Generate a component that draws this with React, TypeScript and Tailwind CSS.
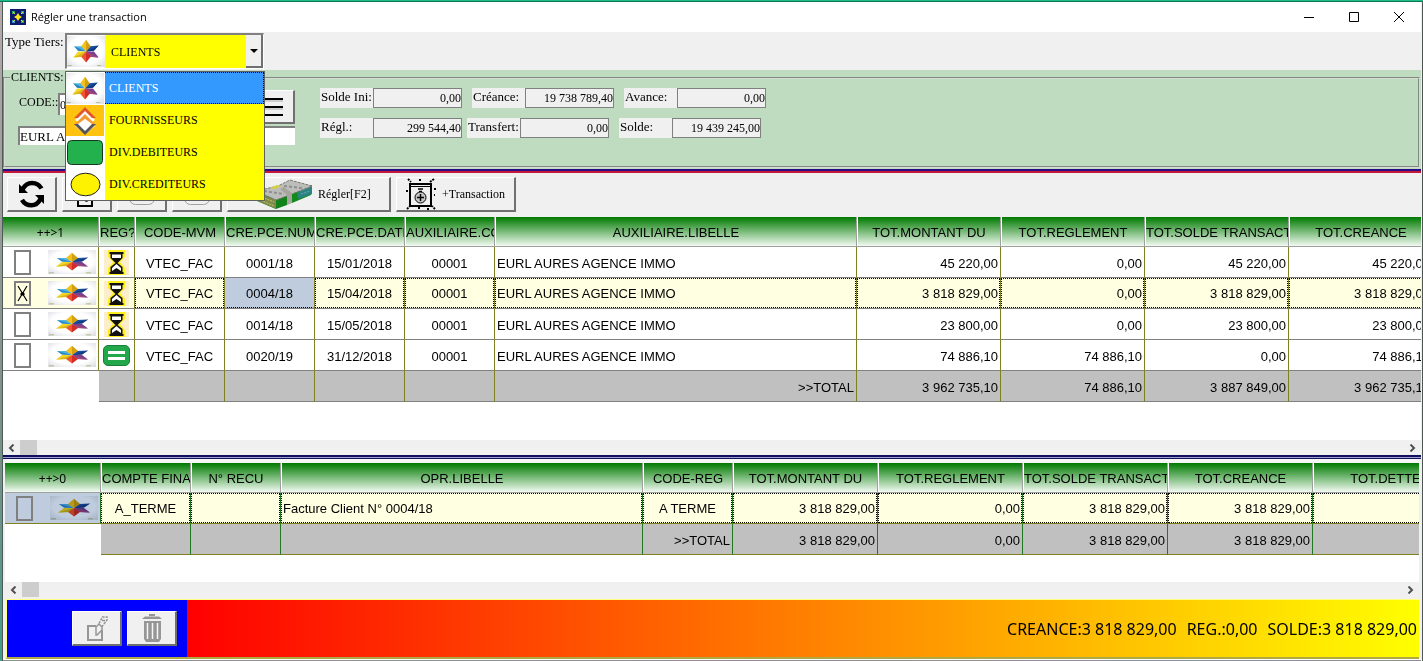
import React, { useState } from "react";

const SERIF = "font-['Liberation_Serif',serif]";
const SANS = "font-['Liberation_Sans',sans-serif]";
const BEVEL =
  "flex items-center border-t border-l border-r-2 border-b-2 border-t-white border-l-white border-r-[#707070] border-b-[#707070] bg-[#f0f0f0]";

function Star({ className }: { className: string }) {
  return (
    <svg viewBox="0 0 48 42" preserveAspectRatio="none" className={className} aria-hidden="true">
      <defs>
        <radialGradient id="paper" cx="50%" cy="45%" r="72%">
          <stop offset="0.6" stopColor="#fff" />
          <stop offset="1" stopColor="#dcdde3" />
        </radialGradient>
      </defs>
      <rect width="48" height="42" fill="url(#paper)" />
      <path d="M24 21 19 14 9 14 14 20Z" fill="#4db4e6" />
      <path d="M9 14 14 20 24 21Z" fill="#2a85bf" />
      <path d="M24 21 29 14 40 13 34 20Z" fill="#1c4fa0" />
      <path d="M40 13 34 20 24 21Z" fill="#123a80" />
      <path d="M24 21 14 21 8 29 19 28Z" fill="#f4d626" />
      <path d="M24 21 8 29 19 28Z" fill="#d9b51c" />
      <path d="M24 21 34 21 40 29 29 28Z" fill="#7b3f8e" />
      <path d="M24 21 40 29 29 28Z" fill="#a04678" />
      <path d="M24 5 18 14 24 21Z" fill="#f2c21a" />
      <path d="M24 5 30 14 24 21Z" fill="#d3a013" />
      <path d="M24 36 18 28 24 21Z" fill="#f0562a" />
      <path d="M24 36 30 28 24 21Z" fill="#d42b2b" />
      <path d="M1 40h5M38 40h5" stroke="#9fb06a" strokeWidth="1" />
    </svg>
  );
}

function Chevrons() {
  return (
    <svg viewBox="0 0 38 31" className="h-[31px] w-[38px]" aria-hidden="true">
      <rect width="38" height="31" fill="#ffc20e" />
      <path d="M19 5 9 15l5 3h10l5-3Z" fill="#fff" />
      <path d="M19 2 8 13h4l7-7 7 7h4Z" fill="#e2572b" />
      <path d="M19 9 8 20h5l6-6 6 6h5Z" fill="#f39a35" />
      <path d="m19 14-10 7 10 8 10-8Z" fill="#fff" />
      <path d="m8 19 11 11 11-11h-4l-7 7-7-7Z" fill="#55565a" />
    </svg>
  );
}

function GreenBox() {
  return (
    <svg viewBox="0 0 38 31" className="h-[31px] w-[38px]" aria-hidden="true">
      <rect x="1.5" y="3.500" width="35" height="24" rx="4" fill="#22b14c" stroke="#16381f" />
    </svg>
  );
}

function YellowOval() {
  return (
    <svg viewBox="0 0 38 31" className="h-[31px] w-[38px]" aria-hidden="true">
      <ellipse cx="19.500" cy="15.500" rx="14.500" ry="11.300" fill="#fff200" stroke="#222" />
    </svg>
  );
}

function Hourglass() {
  return (
    <svg viewBox="0 0 25 25" className="h-[25px] w-[25px]" aria-hidden="true">
      <rect width="25" height="25" fill="#fdeecb" />
      <path d="M4 0h17v7l-5 5 5 6v7H4v-7l5-6-5-5Z" fill="#ffee20" />
      <path d="M5.500 2h14v2h-1v4l-5 5 5 4v5h1v2h-14v-2h1v-5l5-4-5-5V4h-1Z" fill="#111" />
      <path d="M8 4.500h9V8H8Z" fill="#fff" />
      <path d="m12.500 14 4.500 4v3l-4.500-3L8 21v-3Z" fill="#fff" />
    </svg>
  );
}

function EqualBadge() {
  return (
    <svg viewBox="0 0 27 21" className="h-[21px] w-[27px]" aria-hidden="true">
      <rect x="0.5" y="0.5" width="26" height="20" rx="4.500" fill="#22a84b" stroke="#1b7f3b" />
      <path d="M5 7.500h17M5 13.500h17" stroke="#fff" strokeWidth="3" />
    </svg>
  );
}

function Refresh() {
  return (
    <svg viewBox="0 0 27 28" className="h-7 w-[27px]" aria-hidden="true">
      <path d="M4.500 9.500C7 4.500 10 3 14 3c4.500 0 7.500 2 9.500 5.500" fill="none" stroke="#000" strokeWidth="4.500" />
      <path d="M1 4v9h9Z" />
      <path d="M22.500 19c-2.500 5-5 6.300-9 6.300-4.500 0-7.500-2-9.500-5.500" fill="none" stroke="#000" strokeWidth="4.500" />
      <path d="M26 24v-9h-9Z" />
    </svg>
  );
}

function EditIcon({ color }: { color: string }) {
  return (
    <svg viewBox="0 0 24 28" className="h-7 w-6" fill="none" stroke={color} strokeWidth="2" aria-hidden="true">
      <path d="M11 12H3v14h14V16" />
      <path d="M11 21v-8l3-3 3 3v3l-5 5Z" strokeWidth="1.500" />
      <path d="M14 9.500 17.500 3h4.500v3l-5 6.500" strokeWidth="1.500" strokeDasharray="2.500 1" />
      <path d="M17 6.500h3" strokeWidth="1.500" />
    </svg>
  );
}

function Trash() {
  return (
    <svg viewBox="0 0 22 28" className="h-7 w-[22px]" fill="#969696" aria-hidden="true">
      <path d="M8 0h6v2h-6ZM4 2.500h14l3 2.500H1Z" />
      <path d="M3 7h17v18l-2 3H5l-2-3Z" />
      <path d="M6.500 9v16M11.500 9v16M16.500 9v16" stroke="#f5f5f5" strokeWidth="1.500" />
    </svg>
  );
}

function Printer() {
  return (
    <svg viewBox="0 0 28 28" className="h-7 w-7" fill="none" stroke="#a0a0a0" aria-hidden="true">
      <rect x="1.500" y="3.500" width="25" height="21" rx="6" />
      <path d="M6 20.500h15" />
    </svg>
  );
}

function Money() {
  return (
    <svg viewBox="0 0 56 31" className="h-[31px] w-14" aria-hidden="true">
      <path d="m0 12 20 8 11-4v10l-11 4L1 22l3-3-4-3Z" fill="#11831a" />
      <path d="m0 13 20 8v9L2 22Z" fill="#7d8a4a" />
      <path d="m3 17 15 6M2 20l16 7" stroke="#c9c66a" strokeDasharray="2 1" />
      <path d="m36 14 20-7-1 9-19 8Z" fill="#138a1c" />
      <path d="m41 10 15-4v9l-14 5Z" fill="#2b8383" />
      <path d="m44 12 10-4M45 15l9-3" stroke="#6ba6a0" strokeDasharray="2 1" />
      <path d="M0 12 22 7 34 1l22 6-20 8-16 6Z" fill="#bdbdbb" />
      <path d="M0 12 22 7 34 1l22 6-20 8-16 6Z" fill="none" stroke="#77796a" strokeDasharray="3 1" />
      <path d="m8 12 20 3M28 7l18 2" stroke="#8e8f8c" strokeWidth="2" strokeDasharray="3 2" />
      <path d="m24 10 7 6v10l5-2V14l-8-6Z" fill="#a6a69f" />
      <path d="m14 9 7-3 4 1-6 3Z" fill="#d8d23a" />
    </svg>
  );
}

function Safe() {
  return (
    <svg viewBox="0 0 33 33" className="h-[33px] w-[33px]" fill="none" stroke="#000" aria-hidden="true">
      <rect x="5" y="6" width="21" height="22" strokeWidth="2" />
      <path d="M5 8.500h21" />
      <path d="M13 11h5M14 13.500h3" strokeWidth="1.500" />
      <circle cx="15.500" cy="19.500" r="5.500" fill="#c4c4c4" />
      <path d="M15.500 16v7M12 19.500h7" strokeWidth="1.500" />
      <path d="M3 1l3 3M29 1l-4 3M15 1v2M1 13h2M29 11h2M29 17h1M2 31l3-3M30 31l-3-3M13 30h2M22 31h2" strokeWidth="2" strokeDasharray="2 1" />
    </svg>
  );
}

function AppLogo() {
  return (
    <svg viewBox="0 0 16 16" className="h-4 w-4" aria-hidden="true">
      <rect width="16" height="16" fill="#0b1a6b" />
      <path d="M2 2h3v3H2zM11 11h3v3h-3z" fill="#2ea35c" />
      <path d="M11 2h3v3h-3zM2 11h3v3H2z" fill="#3d8fc4" />
      <path d="M8 4l1.500 2.500L12 8 9.500 9.500 8 12 6.500 9.500 4 8l2.500-1.500Z" fill="#ffe81a" />
      <path d="M3 3l2 2M13 3l-2 2M3 13l2-2M13 13l-2-2" stroke="#e8e33a" />
    </svg>
  );
}

function Arrow({ right = false }: { right?: boolean }) {
  return (
    <svg viewBox="0 0 7 8" className="h-2 w-[7px]" fill="none" stroke="#505050" strokeWidth="2" aria-hidden="true">
      <path d={right ? "M1.500 0.500 5 4 1.500 7.500" : "M5.500 0.500 2 4l3.500 3.500"} />
    </svg>
  );
}

function ScrollBar() {
  return (
    <div className="flex h-[15px] shrink-0 items-center bg-[#f0f0f0]">
      <button type="button" aria-label="Défiler à gauche" className="flex w-[17px] justify-center">
        <Arrow />
      </button>
      <span className="h-[15px] w-[17px] bg-[#cdcdcd]" />
      <button type="button" aria-label="Défiler à droite" className="ml-auto flex w-[17px] justify-center">
        <Arrow right />
      </button>
    </div>
  );
}

function RowMark({ label, checked, onChange, tinted = false }: { label: string; checked: boolean; onChange: () => void; tinted?: boolean }) {
  return (
    <div className="flex h-[30px] items-center justify-between pr-0.5 pl-[11px]">
      <span className="grid">
        <input
          type="checkbox"
          aria-label={label}
          checked={checked}
          onChange={onChange}
          className="col-start-1 row-start-1 h-[25px] w-[17px] appearance-none border-2 border-[#808080]"
        />
        {checked && (
          <svg viewBox="0 0 17 25" className="pointer-events-none col-start-1 row-start-1 h-[25px] w-[17px]" stroke="#000" aria-hidden="true">
            <path d="M4 5l9 15M13 5 4 20" strokeWidth="1.200" />
            <path d="M7 12h3v2H7z" />
          </svg>
        )}
      </span>
      <Star className={tinted ? "h-6 w-12 mix-blend-multiply" : "h-6 w-12"} />
    </div>
  );
}

const ALIGN = { c: "text-center", l: "text-left", r: "text-right" } as const;
type Align = keyof typeof ALIGN;

function Head({ titles, first }: { titles: string[]; first: string }) {
  return (
    <thead>
      <tr className="h-[30px]">
        {[first, ...titles].map((t, i) => (
          <th
            key={t}
            scope="col"
            className="overflow-hidden border-r border-b border-r-[#a0a0a0] border-b-[#a0a0a0] bg-linear-to-b/srgb from-[#007a00] to-[#f2faf2] p-0 font-normal whitespace-nowrap"
          >
            <div
              className={`h-[29px] overflow-hidden text-center leading-[31px] ${
                i === 0 ? "font-['Noto_Sans',sans-serif] text-xs" : "border-l border-white"
              }`}
            >
              {t}
            </div>
          </th>
        ))}
      </tr>
    </thead>
  );
}

const MAIN_HEAD = ["REG?", "CODE-MVM", "CRE.PCE.NUM", "CRE.PCE.DATE", "AUXILIAIRE.CODE", "AUXILIAIRE.LIBELLE", "TOT.MONTANT DU", "TOT.REGLEMENT", "TOT.SOLDE TRANSACTION", "TOT.CREANCE"];
const MAIN_ALIGN: Align[] = ["c", "c", "c", "c", "l", "r", "r", "r", "r"];
const MAIN_ROWS = [
  ["VTEC_FAC", "0001/18", "15/01/2018", "00001", "EURL AURES AGENCE IMMO", "45 220,00", "0,00", "45 220,00", "45 220,00"],
  ["VTEC_FAC", "0004/18", "15/04/2018", "00001", "EURL AURES AGENCE IMMO", "3 818 829,00", "0,00", "3 818 829,00", "3 818 829,00"],
  ["VTEC_FAC", "0014/18", "15/05/2018", "00001", "EURL AURES AGENCE IMMO", "23 800,00", "0,00", "23 800,00", "23 800,00"],
  ["VTEC_FAC", "0020/19", "31/12/2018", "00001", "EURL AURES AGENCE IMMO", "74 886,10", "74 886,10", "0,00", "74 886,10"],
];
const MAIN_TOTAL = ["", "", "", "", "", ">>TOTAL", "3 962 735,10", "74 886,10", "3 887 849,00", "3 962 735,10"];

function MainTable() {
  const [checked, setChecked] = useState([false, true, false, false]);
  const line = "border-r border-b border-r-[#808020] border-b-[#808080] p-0";
  return (
    <table className="w-[1430px] table-fixed border-separate border-spacing-0 text-[13px]">
      <colgroup>
        <col className="w-24" />
        <col className="w-9" />
        <col className="w-[90px]" />
        <col className="w-[90px]" />
        <col className="w-[90px]" />
        <col className="w-[90px]" />
        <col className="w-[362px]" />
        <col className="w-36" />
        <col className="w-36" />
        <col className="w-36" />
        <col className="w-36" />
      </colgroup>
      <Head first="++>1" titles={MAIN_HEAD} />
      <tbody>
        {MAIN_ROWS.map((row, r) => (
          <tr key={row[1]} className={r === 1 ? "bg-[#ffffe1]" : "bg-white"}>
            <td className={line}>
              <RowMark
                label={`Sélectionner ${row[1]}`}
                checked={checked[r]}
                onChange={() => setChecked(checked.map((c, i) => (i === r ? !c : c)))}
              />
            </td>
            <td className={line}>
              <div className="flex h-[30px] items-center justify-center">{r === 3 ? <EqualBadge /> : <Hourglass />}</div>
            </td>
            {row.map((v, c) => (
              <td key={c} className={line}>
                <div
                  className={`h-[30px] px-px ${ALIGN[MAIN_ALIGN[c]]} ${
                    r !== 1
                      ? "border-x border-transparent leading-[34px]"
                      : c === 1
                        ? "border border-dotted border-x-[#bfccdd] border-t-[#bfccdd] border-b-black bg-[#bfccdd] leading-[30px]"
                        : "border border-dotted border-black leading-[30px]"
                  }`}
                >
                  {v}
                </div>
              </td>
            ))}
          </tr>
        ))}
      </tbody>
      <tfoot>
        <tr>
          <td className="p-0" />
          {MAIN_TOTAL.map((v, i) => (
            <td key={i} className={`${line} bg-[#c0c0c0]`}>
              <div className="h-[30px] px-0.5 text-right leading-[34px]">{v}</div>
            </td>
          ))}
        </tr>
      </tfoot>
    </table>
  );
}

const SUB_HEAD = ["COMPTE FINANCIER", "N° RECU", "OPR.LIBELLE", "CODE-REG", "TOT.MONTANT DU", "TOT.REGLEMENT", "TOT.SOLDE TRANSACTION", "TOT.CREANCE", "TOT.DETTE"];
const SUB_ALIGN: Align[] = ["c", "c", "l", "c", "r", "r", "r", "r", "r"];
const SUB_ROW = ["A_TERME", "", "Facture Client N° 0004/18", "A TERME", "3 818 829,00", "0,00", "3 818 829,00", "3 818 829,00", ""];
const SUB_TOTAL = ["", "", "", ">>TOTAL", "3 818 829,00", "0,00", "3 818 829,00", "3 818 829,00", ""];

function SubTable() {
  const [checked, setChecked] = useState(false);
  const line = "border-r border-b border-r-[#207820] border-b-[#808020] p-0";
  return (
    <table className="w-[1453px] table-fixed border-separate border-spacing-0 text-[13px]">
      <colgroup>
        <col className="w-24" />
        <col className="w-[90px]" />
        <col className="w-[90px]" />
        <col className="w-[362px]" />
        <col className="w-[90px]" />
        <col className="w-[145px]" />
        <col className="w-[145px]" />
        <col className="w-[145px]" />
        <col className="w-[145px]" />
        <col className="w-[145px]" />
      </colgroup>
      <Head first="++>0" titles={SUB_HEAD} />
      <tbody>
        <tr className="bg-[#ffffe1]">
          <td className={`${line} bg-[#bfccdd]`}>
            <RowMark tinted label="Sélectionner A_TERME" checked={checked} onChange={() => setChecked(!checked)} />
          </td>
          {SUB_ROW.map((v, c) => (
            <td key={c} className={line}>
              <div className={`h-[30px] border border-dotted border-black px-px leading-[30px] ${ALIGN[SUB_ALIGN[c]]}`}>{v}</div>
            </td>
          ))}
        </tr>
      </tbody>
      <tfoot>
        <tr>
          <td className="p-0" />
          {SUB_TOTAL.map((v, i) => (
            <td key={i} className={`${line} bg-[#c0c0c0]`}>
              <div className="h-[30px] px-0.5 text-right leading-[34px]">{v}</div>
            </td>
          ))}
        </tr>
      </tfoot>
    </table>
  );
}

function Field({ id, label, value }: { id: string; label: string; value: string }) {
  return (
    <div className="flex h-5 w-[142px]">
      <label htmlFor={id} className="w-[53px] bg-[#f0f0f0] pl-px text-[13px] leading-[18px] whitespace-nowrap">
        {label}
      </label>
      <input id={id} readOnly defaultValue={value} className="w-[89px] border border-[#808080] bg-[#f0f0f0] text-right text-xs" />
    </div>
  );
}

const TYPES = [
  { name: "CLIENTS", icon: <Star className="h-[31px] w-[38px]" /> },
  { name: "FOURNISSEURS", icon: <Chevrons /> },
  { name: "DIV.DEBITEURS", icon: <GreenBox /> },
  { name: "DIV.CREDITEURS", icon: <YellowOval /> },
];

function TypeSelector() {
  const [type, setType] = useState("CLIENTS");
  const current = TYPES.find((t) => t.name === type) ?? TYPES[0];
  return (
    <div className="flex h-[38px] items-start pl-0.5">
      <label htmlFor="type-tiers" className="w-[60px] pt-px text-[13px] leading-[18px] whitespace-nowrap">
        Type Tiers:
      </label>
      <div className="relative mt-px">
        <div className="flex h-9 w-[199px] items-center border-t-2 border-l-2 border-r border-b border-[#808080] border-r-white border-b-white bg-[#ffff00]">
          <span className="flex h-[33px] w-[38px] shrink-0 items-center bg-white">{current.icon}</span>
          <select
            id="type-tiers"
            value={type}
            onChange={(e) => setType(e.target.value)}
            className="h-[33px] min-w-0 flex-1 appearance-none bg-[#ffff00] pl-1.5 text-xs outline-none"
          >
            {TYPES.map((t) => (
              <option key={t.name}>{t.name}</option>
            ))}
          </select>
          <span className="pointer-events-none flex h-[33px] w-[17px] items-center justify-center border-r-2 border-b-2 border-[#707070] bg-[#f0f0f0]">
            <svg viewBox="0 0 8 4" className="h-1 w-2" aria-hidden="true">
              <path d="M0 0h8L4 4Z" />
            </svg>
          </span>
        </div>
        <ul role="listbox" aria-label="Type Tiers" className="absolute top-[38px] left-0 z-10 w-[200px] border border-[#606060] bg-white text-xs">
          {TYPES.map((t) => (
            <li key={t.name} role="option" aria-selected={t.name === type} onClick={() => setType(t.name)} className="flex h-8">
              <span className="flex w-[39px] shrink-0 items-center">{t.icon}</span>
              <span
                className={`flex flex-1 items-center pl-1 ${
                  t.name === type ? "border-y border-r border-dotted border-black bg-[#3399ff] text-white" : "bg-[#ffff00]"
                }`}
              >
                {t.name}
              </span>
            </li>
          ))}
        </ul>
      </div>
    </div>
  );
}

export default function App() {
  return (
    <div className={`flex h-screen min-h-[640px] flex-col overflow-hidden bg-[#f0f0f0] text-black ${SERIF}`}>
      <div className="h-[2px] shrink-0 border-b border-[#0c7a55] bg-[#20b98a]" />
      <div className="flex min-h-0 flex-1">
        <div className="w-[3px] shrink-0 border-r border-[#4c5a58] bg-linear-to-b from-[#b9a9a9] via-[#7b8f86] via-65% to-[#3f9c8c]" />
        <div className="flex min-w-0 flex-1 flex-col border-r border-[#4e5653] pr-px">
          <header className="flex h-[30px] shrink-0 items-center bg-white pl-[7px]">
            <AppLogo />
            <h1 className="flex-1 pl-[5px] font-['Open_Sans',sans-serif] text-[11px]">Régler une transaction</h1>
            <button type="button" aria-label="Réduire" className="flex h-[30px] w-[45px] items-center justify-center">
              <svg viewBox="0 0 10 10" className="h-2.5 w-2.5" stroke="#000" aria-hidden="true"><path d="M0 5.500h10" /></svg>
            </button>
            <button type="button" aria-label="Agrandir" className="flex h-[30px] w-[45px] items-center justify-center">
              <svg viewBox="0 0 10 10" className="h-2.5 w-2.5" fill="none" stroke="#000" aria-hidden="true"><path d="M.5.5h9v9h-9z" /></svg>
            </button>
            <button type="button" aria-label="Fermer" className="flex h-[30px] w-[45px] items-center justify-center">
              <svg viewBox="0 0 10 10" className="h-2.5 w-2.5" stroke="#000" aria-hidden="true"><path d="m0 0 10 10M10 0 0 10" /></svg>
            </button>
          </header>

          <TypeSelector />

          <section className="h-[99px] shrink-0 bg-[#c0dcc0]">
            <fieldset className="mr-px h-[98px] border-2 border-[#d4dcd4] [border-style:groove]">
              <legend className="ml-[5px] px-px text-xs leading-[15px]">CLIENTS:</legend>
              <div className="flex pl-[13px]">
                <div className="w-[277px] pt-[5px]">
                  <div className="flex h-[34px]">
                    <label htmlFor="code" className="w-10 pt-[3px] pl-px text-xs leading-[18px]">CODE::</label>
                    <input id="code" defaultValue="00001" className="mt-[3px] h-[22px] w-32 border-t-2 border-l-2 border-[#808080] bg-white text-xs" />
                    <button type="button" aria-label="Liste des clients" className={`ml-auto h-[34px] w-[50px] justify-center ${BEVEL}`}>
                      <svg viewBox="0 0 26 20" className="h-5 w-[26px]" aria-hidden="true">
                        <path d="M0 2h26M0 10h26M0 18h26" stroke="#000" strokeWidth="2" />
                        <path d="M0 4h26M0 12h26" stroke="#aaa" />
                      </svg>
                    </button>
                  </div>
                  <input aria-label="Nom du client" defaultValue="EURL AURES AGENCE IMMO" className="h-[19px] w-full border-t-2 border-l-2 border-[#808080] bg-white text-[13px]" />
                </div>
                <div className="ml-[25px] flex flex-col gap-2.5 pt-[3px]">
                  <div className="flex gap-2.5">
                    <Field id="solde-ini" label="Solde Ini:" value="0,00" />
                    <Field id="creance" label="Créance:" value="19 738 789,40" />
                    <Field id="avance" label="Avance:" value="0,00" />
                  </div>
                  <div className="flex gap-2.5">
                    <div className="flex gap-[5px]">
                      <Field id="regl" label="Régl.:" value="299 544,40" />
                      <Field id="transfert" label="Transfert:" value="0,00" />
                    </div>
                    <Field id="solde" label="Solde:" value="19 439 245,00" />
                  </div>
                </div>
              </div>
            </fieldset>
          </section>

          <div className="h-1 shrink-0 border-t-2 border-b-2 border-t-[#2a0a86] border-b-[#c41a3a]" />

          <div className="flex h-[44px] shrink-0 items-start gap-[5px] pt-1 pl-1 text-xs">
            <button type="button" aria-label="Actualiser" className={`h-[35px] w-[50px] justify-center ${BEVEL}`}><Refresh /></button>
            <button type="button" aria-label="Modifier" className={`h-[35px] w-[50px] justify-center ${BEVEL}`}><EditIcon color="#000" /></button>
            <button type="button" aria-label="Imprimer" disabled className={`h-[35px] w-[50px] justify-center ${BEVEL}`}><Printer /></button>
            <button type="button" aria-label="Aperçu" disabled className={`h-[35px] w-[50px] justify-center ${BEVEL}`}><Printer /></button>
            <button type="button" className={`h-[35px] w-[164px] gap-1.5 pl-7 ${BEVEL}`}><Money />Régler[F2]</button>
            <button type="button" className={`h-[35px] w-[120px] gap-1 pl-2 ${BEVEL}`}><Safe />+Transaction</button>
          </div>

          <section className={`flex min-h-[200px] flex-[238_1_0] flex-col bg-white ${SANS}`}>
            <div className="flex-1 overflow-hidden"><MainTable /></div>
            <ScrollBar />
          </section>

          <div className="h-[4px] shrink-0 border-t-2 border-b border-[#10105c] bg-[#a0a0d0]" />

          <section className={`mx-0.5 flex min-h-[120px] flex-[134_1_0] flex-col border-t-4 border-[#f6f6f6] bg-white ${SANS}`}>
            <div className="flex-1 overflow-hidden"><SubTable /></div>
            <ScrollBar />
          </section>

          <footer className="mt-0.5 mr-0.5 ml-[3px] flex h-[60px] shrink-0 border-t border-l border-b-2 border-t-[#ffff80] border-l-[#ffff80] border-b-[#b0a840]">
            <div className="flex w-[180px] shrink-0 items-center gap-[5px] bg-[#0000ff] pl-[65px]">
              <button type="button" aria-label="Modifier le règlement" disabled className={`h-[35px] w-[50px] justify-center ${BEVEL}`}><EditIcon color="#969696" /></button>
              <button type="button" aria-label="Supprimer le règlement" disabled className={`h-[35px] w-[50px] justify-center ${BEVEL}`}><Trash /></button>
            </div>
            <div className="flex flex-1 items-center justify-end gap-[10px] bg-linear-to-r/srgb from-[#ff0000] to-[#ffff00] pr-0.5 font-['Noto_Sans',sans-serif] text-base">
              <span>CREANCE:3 818 829,00</span>
              <span>REG.:0,00</span>
              <span>SOLDE:3 818 829,00</span>
            </div>
          </footer>
          <div className="h-[2px] shrink-0 border-b border-[#909090] bg-white" />
        </div>
      </div>
    </div>
  );
}
